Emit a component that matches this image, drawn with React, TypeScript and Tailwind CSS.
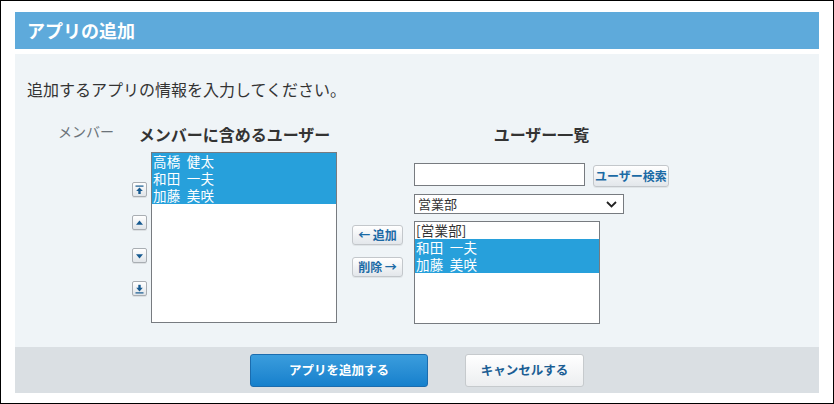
import React from "react";

const font = { fontFamily: '"Noto Sans CJK JP", "Noto Sans", sans-serif' };

function ArrowButton({ kind }: { kind: "top" | "up" | "down" | "bottom" }) {
  return (
    <button className="flex h-[15px] w-[15px] items-center justify-center rounded-[2px] border border-[#a9aeb3] bg-gradient-to-b from-white to-[#e1e5e9] shadow-[0_1px_0_rgba(0,0,0,0.08)]">
      <svg width="9" height="10" viewBox="0 0 9 10" className="text-[#175a90]" fill="currentColor">
        {kind === "top" && (
          <>
            <rect x="0.5" y="0.5" width="8" height="1.2" />
            <path d="M4.5 2.4 L7.8 6 L1.2 6 Z" />
            <rect x="3.3" y="5.8" width="2.4" height="3.2" />
          </>
        )}
        {kind === "up" && <path d="M4.5 2.6 L8 6.8 L1 6.8 Z" />}
        {kind === "down" && <path d="M4.5 7.4 L8 3.2 L1 3.2 Z" />}
        {kind === "bottom" && (
          <>
            <rect x="3.3" y="0.8" width="2.4" height="3.2" />
            <path d="M4.5 7.4 L7.8 3.8 L1.2 3.8 Z" />
            <rect x="0.5" y="8.3" width="8" height="1.2" />
          </>
        )}
      </svg>
    </button>
  );
}

function SmallButton({ children, className = "" }: { children: React.ReactNode; className?: string }) {
  return (
    <button
      className={
        "flex items-center justify-center rounded-[3px] border border-[#c3c7cb] bg-gradient-to-b from-white to-[#e3e7eb] text-[12px] font-bold leading-none text-[#1b6aa5] shadow-[0_1px_0_rgba(0,0,0,0.06)] " +
        className
      }
    >
      {children}
    </button>
  );
}

const memberList = [
  { name: "高橋 健太", selected: true },
  { name: "和田 一夫", selected: true },
  { name: "加藤 美咲", selected: true },
];

const userList = [
  { name: "[営業部]", selected: false },
  { name: "和田 一夫", selected: true },
  { name: "加藤 美咲", selected: true },
];

function ListBox({ items, className }: { items: { name: string; selected: boolean }[]; className: string }) {
  return (
    <div className={"border border-[#777b80] bg-white " + className}>
      {items.map((item) => (
        <div
          key={item.name}
          className={
            "h-[17px] whitespace-pre pl-[1px] text-[13.5px] leading-[17px] tracking-[0.2px] " +
            (item.selected ? "bg-[#27a0db] text-white" : "text-[#333]")
          }
        >
          {item.name.replace(" ", "  ")}
        </div>
      ))}
    </div>
  );
}

export default function App() {
  return (
    <div style={font} className="h-[404px] w-[834px] border border-black bg-white pl-[14px] pt-[11px]">
      <div className="w-[804px]">
        <div className="flex h-[37px] items-center bg-[#5eaadb] pl-[12px] text-[18px] font-bold text-white">
          アプリの追加
        </div>

        <div className="mt-[5px] h-[293px] bg-[#eff4f7] pt-[25px]">
          <p className="pl-[12px] text-[16px] leading-[20px] text-[#333]">
            追加するアプリの情報を入力してください。
          </p>

          <div className="mt-[25px] flex items-start">
            <div className="ml-[43px] w-[74px] text-[14px] leading-[14px] text-[#6b7279]">メンバー</div>

            <div className="flex w-[205px] flex-col">
              <h3 className="text-center text-[16px] font-bold leading-[20px] text-[#333]">
                メンバーに含めるユーザー
              </h3>
              <div className="mt-[8px] flex">
                <div className="flex w-[15px] flex-col gap-[18px] pt-[30px]">
                  <ArrowButton kind="top" />
                  <ArrowButton kind="up" />
                  <ArrowButton kind="down" />
                  <ArrowButton kind="bottom" />
                </div>
                <ListBox items={memberList} className="ml-[4px] h-[171px] w-[186px]" />
              </div>
            </div>

            <div className="ml-[15px] flex w-[51px] flex-col gap-[12px] pt-[101px]">
              <SmallButton className="h-[20px] w-[51px]">← 追加</SmallButton>
              <SmallButton className="h-[20px] w-[51px]">削除 →</SmallButton>
            </div>

            <div className="ml-[11px] flex w-[255px] flex-col">
              <h3 className="text-center text-[16px] font-bold leading-[20px] text-[#333]">ユーザー一覧</h3>
              <div className="mt-[19px] flex items-start">
                <input className="h-[23px] w-[171px] border border-[#777b80] bg-white" />
                <SmallButton className="ml-[8px] mt-[2px] h-[22px] w-[76px]">ユーザー検索</SmallButton>
              </div>
              <div className="mt-[7px] flex h-[20px] w-[210px] items-center justify-between border border-[#777b80] bg-white pl-[3px] pr-[6px] text-[13px] text-[#333]">
                <span>営業部</span>
                <svg width="11" height="7" viewBox="0 0 11 7" fill="none" stroke="#222" strokeWidth="1.8">
                  <path d="M1 1 L5.5 5.5 L10 1" />
                </svg>
              </div>
              <ListBox items={userList} className="mt-[7px] h-[103px] w-[186px]" />
            </div>
          </div>
        </div>

        <div className="flex h-[46px] items-center bg-[#dadfe3] pl-[235px]">
          <button className="h-[33px] w-[178px] rounded-[3px] border border-[#1b6cae] bg-gradient-to-b from-[#3a9ddd] to-[#1580cc] text-[12.5px] font-bold text-white">
            アプリを追加する
          </button>
          <button className="ml-[37px] h-[33px] w-[119px] rounded-[3px] border border-[#c6cacd] bg-gradient-to-b from-white to-[#eceef0] text-[12.5px] font-bold text-[#1b5e94]">
            キャンセルする
          </button>
        </div>
      </div>
    </div>
  );
}
